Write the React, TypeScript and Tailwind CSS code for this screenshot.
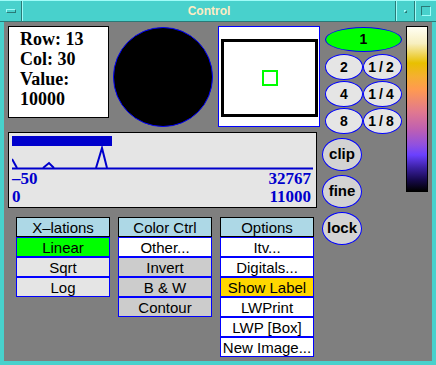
import type { ReactNode } from "react"

const serif = "font-['Liberation_Serif',serif]"
const sans = "font-['Liberation_Sans',Arial,sans-serif]"

function TitleBar() {
  return (
    <div className="flex h-[22px] border-t border-[#9ffcf8] border-b border-b-[#2a7a77]">
      <div className="flex w-[22px] items-center justify-center border-r border-[#2a7a77]">
        <div className="h-[4px] w-[10px] border-t border-l border-[#9ffcf8] border-b border-r border-b-[#2a7a77] border-r-[#2a7a77]" />
      </div>
      <div className="flex flex-1 items-center justify-center border-l border-[#9ffcf8] border-r border-r-[#2a7a77]">
        <span className={`${sans} text-[12px] font-bold leading-none text-[#ffecc4]`}>
          Control
        </span>
      </div>
      <div className="flex w-[19px] items-center justify-center border-l border-[#9ffcf8] border-r border-r-[#2a7a77]">
        <div className="h-[3px] w-[3px] border-t border-l border-[#9ffcf8] border-b border-r border-b-[#2a7a77] border-r-[#2a7a77]" />
      </div>
      <div className="flex w-[21px] items-center justify-center border-l border-[#9ffcf8]">
        <div className="h-[10px] w-[10px] border-t border-l border-[#2a7a77] border-b border-r border-b-[#9ffcf8] border-r-[#9ffcf8]" />
      </div>
    </div>
  )
}

function Oval({
  children,
  className,
}: {
  children: ReactNode
  className: string
}) {
  return (
    <div
      className={`${sans} flex items-center justify-center rounded-[50%] border border-[#0000ff] text-[14px] font-bold text-black ${className}`}
    >
      {children}
    </div>
  )
}

function Histogram() {
  return (
    <div className="mt-[5px] h-[76px] w-[309px] border border-black bg-[#e5e5e5] px-[3px] pt-[3px]">
      <div className="h-[10px] w-[100px] bg-[#0000cc]" />
      <svg width="301" height="24" className="block">
        <g fill="none" stroke="#0000cc" strokeWidth="2">
          <polyline points="0,13 5,22" />
          <polyline points="31,22 37,17 42,22" />
          <polyline points="84,22 90,2 95,22" />
        </g>
        <line x1="0" y1="22.5" x2="301" y2="22.5" stroke="#0000cc" strokeWidth="2" />
      </svg>
      <div className={`${serif} pr-[2px] text-[17px] font-bold leading-[18px] text-[#0000cc]`}>
        <div className="flex justify-between">
          <span>–50</span>
          <span>32767</span>
        </div>
        <div className="flex justify-between">
          <span>0</span>
          <span>11000</span>
        </div>
      </div>
    </div>
  )
}

function Menu({
  title,
  items,
}: {
  title: string
  items: { label: string; bg: string }[]
}) {
  return (
    <div className={`${sans} flex w-[94px] flex-col text-[15px] leading-none text-black`}>
      <div className="flex h-[20px] items-center justify-center border border-black bg-[#add8e6]">
        {title}
      </div>
      {items.map((it) => (
        <div
          key={it.label}
          className={`flex h-[20px] items-center justify-center border border-[#0000ff] ${it.bg}`}
        >
          {it.label}
        </div>
      ))}
    </div>
  )
}

export default function App() {
  return (
    <div className="flex h-[365px] w-[436px] flex-col bg-[#48d1cc]">
      <TitleBar />
      <div className="flex flex-1 px-[4px] pb-[4px]">
        <div className="flex flex-1 bg-[#7f7f7f] pl-[4px] pt-[4px]">
          {/* left column */}
          <div className="flex w-[312px] flex-col">
            <div className="flex items-start">
              <div
                className={`${serif} h-[92px] w-[101px] border border-black bg-white pl-[11px] pt-[2px] text-[18px] font-bold leading-[20px] text-black`}
              >
                <div>Row: 13</div>
                <div>Col: 30</div>
                <div>Value:</div>
                <div>10000</div>
              </div>
              <div className="ml-[4px] mt-[1px] h-[100px] w-[100px] rounded-full border border-[#0000ff] bg-black" />
              <div className="relative ml-[5px] h-[101px] w-[102px] border border-[#0000ff] bg-white">
                <div className="absolute left-[2px] top-[12px] h-[78px] w-[97px] border-[3px] border-black" />
                <div className="absolute left-[43px] top-[43px] h-[16px] w-[16px] border-2 border-[#00ff00]" />
              </div>
            </div>
            <Histogram />
            <div className="mt-[9px] flex items-start gap-[8px] pl-[8px]">
              <Menu
                title="X–lations"
                items={[
                  { label: "Linear", bg: "bg-[#00ff00]" },
                  { label: "Sqrt", bg: "bg-[#e5e5e5]" },
                  { label: "Log", bg: "bg-[#e5e5e5]" },
                ]}
              />
              <Menu
                title="Color Ctrl"
                items={[
                  { label: "Other...", bg: "bg-white" },
                  { label: "Invert", bg: "bg-[#cccccc]" },
                  { label: "B & W", bg: "bg-[#cccccc]" },
                  { label: "Contour", bg: "bg-[#cccccc]" },
                ]}
              />
              <Menu
                title="Options"
                items={[
                  { label: "Itv...", bg: "bg-white" },
                  { label: "Digitals...", bg: "bg-white" },
                  { label: "Show Label", bg: "bg-[#ffd700]" },
                  { label: "LWPrint", bg: "bg-white" },
                  { label: "LWP [Box]", bg: "bg-white" },
                  { label: "New Image...", bg: "bg-white" },
                ]}
              />
            </div>
          </div>

          {/* zoom + toggles */}
          <div className="ml-[1px] flex w-[81px] flex-col">
            <div className="ml-[4px] flex w-[77px] flex-col">
              <Oval className="mt-[1px] h-[25px] w-[77px] bg-[#00ff00]">1</Oval>
              <div className="mt-[2px] flex">
                <Oval className="h-[26px] w-[38px] bg-[#e5e5e5]">2</Oval>
                <Oval className="h-[26px] w-[39px] bg-[#e5e5e5] tracking-[3px]">1/2</Oval>
              </div>
              <div className="mt-[1px] flex">
                <Oval className="h-[26px] w-[38px] bg-[#e5e5e5]">4</Oval>
                <Oval className="h-[26px] w-[39px] bg-[#e5e5e5] tracking-[3px]">1/4</Oval>
              </div>
              <div className="mt-[1px] flex">
                <Oval className="h-[26px] w-[38px] bg-[#e5e5e5]">8</Oval>
                <Oval className="h-[26px] w-[39px] bg-[#e5e5e5] tracking-[3px]">1/8</Oval>
              </div>
            </div>
            <div className="ml-[1px] mt-[4px] flex flex-col gap-[4px]">
              <Oval className="h-[33px] w-[40px] bg-[#d3d3d3] text-[15px]">clip</Oval>
              <Oval className="h-[33px] w-[40px] bg-[#d3d3d3] text-[15px]">fine</Oval>
              <Oval className="h-[33px] w-[40px] bg-[#d3d3d3] text-[15px]">lock</Oval>
            </div>
          </div>

          {/* colour bar */}
          <div className="ml-[4px] h-[166px] w-[22px] border border-black bg-[linear-gradient(to_bottom,#fffff4_0%,#f7efc0_10%,#e8c000_22%,#f5b030_30%,#ff9a50_38%,#e07890_52%,#c060b0_62%,#9050e0_72%,#6a40ff_78%,#3a20a0_86%,#180a50_93%,#000000_100%)]" />
        </div>
      </div>
    </div>
  )
}
